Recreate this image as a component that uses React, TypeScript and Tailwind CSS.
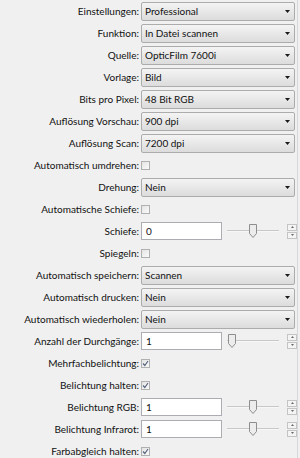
import React from 'react';

type Row =
  | { label: string; kind: 'select'; value: string }
  | { label: string; kind: 'check'; checked: boolean }
  | { label: string; kind: 'slider'; value: string; pos: number };

const rows: Row[] = [
  { label: 'Einstellungen:', kind: 'select', value: 'Professional' },
  { label: 'Funktion:', kind: 'select', value: 'In Datei scannen' },
  { label: 'Quelle:', kind: 'select', value: 'OpticFilm 7600i' },
  { label: 'Vorlage:', kind: 'select', value: 'Bild' },
  { label: 'Bits pro Pixel:', kind: 'select', value: '48 Bit RGB' },
  { label: 'Auflösung Vorschau:', kind: 'select', value: '900 dpi' },
  { label: 'Auflösung Scan:', kind: 'select', value: '7200 dpi' },
  { label: 'Automatisch umdrehen:', kind: 'check', checked: false },
  { label: 'Drehung:', kind: 'select', value: 'Nein' },
  { label: 'Automatische Schiefe:', kind: 'check', checked: false },
  { label: 'Schiefe:', kind: 'slider', value: '0', pos: 26 },
  { label: 'Spiegeln:', kind: 'check', checked: false },
  { label: 'Automatisch speichern:', kind: 'select', value: 'Scannen' },
  { label: 'Automatisch drucken:', kind: 'select', value: 'Nein' },
  { label: 'Automatisch wiederholen:', kind: 'select', value: 'Nein' },
  { label: 'Anzahl der Durchgänge:', kind: 'slider', value: '1', pos: 5 },
  { label: 'Mehrfachbelichtung:', kind: 'check', checked: true },
  { label: 'Belichtung halten:', kind: 'check', checked: true },
  { label: 'Belichtung RGB:', kind: 'slider', value: '1', pos: 26 },
  { label: 'Belichtung Infrarot:', kind: 'slider', value: '1', pos: 26 },
  { label: 'Farbabgleich halten:', kind: 'check', checked: true },
];

const Select = ({ value }: { value: string }) => (
  <div className="flex h-[19px] w-[154px] items-center justify-between rounded-[2px] border border-[#acacac] bg-gradient-to-b from-[#f4f4f4] to-[#dcdcdc] pl-[3px] pr-[4px]">
    <span>{value}</span>
    <svg width="5" height="3" viewBox="0 0 5 3">
      <path d="M0 0h5L2.5 3z" fill="#1a1a1a" />
    </svg>
  </div>
);

const Check = ({ checked }: { checked: boolean }) => (
  <div className="flex h-[9px] w-[9px] items-center justify-center border border-[#b0b0b0] bg-gradient-to-br from-[#e4e4e4] to-[#fafafa]">
    {checked && (
      <svg width="7" height="7" viewBox="0 0 7 7">
        <path d="M1 3.5l1.8 2L6 1" stroke="#5a6680" strokeWidth="1.2" fill="none" />
      </svg>
    )}
  </div>
);

const Slider = ({ value, pos }: { value: string; pos: number }) => (
  <div className="flex items-center">
    <div className="flex h-[18px] w-[81px] items-center border border-[#abadb3] bg-white pl-[4px]">
      {value}
    </div>
    <div className="relative ml-[5px] h-[18px] w-[52px]">
      <div className="absolute left-0 right-0 top-[8px] h-[2px] border-t border-[#c8c8c8] bg-[#f7f7f7]" />
      <svg className="absolute top-[2px]" style={{ left: pos - 4 }} width="8" height="14" viewBox="0 0 8 14">
        <path d="M0.5 0.5h7v9L4 13.5 0.5 9.5z" fill="#ececec" stroke="#8e8e8e" />
      </svg>
    </div>
    <div className="ml-[8px] flex w-[10px] flex-col gap-[1px]">
      <div className="flex h-[7px] items-center justify-center border border-[#c4c4c4] bg-[#f4f4f4]">
        <svg width="3" height="2" viewBox="0 0 3 2">
          <path d="M0 2h3L1.5 0z" fill="#6a6a6a" />
        </svg>
      </div>
      <div className="flex h-[7px] items-center justify-center border border-[#c4c4c4] bg-[#f4f4f4]">
        <svg width="3" height="2" viewBox="0 0 3 2">
          <path d="M0 0h3L1.5 2z" fill="#6a6a6a" />
        </svg>
      </div>
    </div>
  </div>
);

const App: React.FC = () => {
  return (
    <div className="flex h-[458px] w-[300px] overflow-hidden bg-[#f0f0f0] text-[10px] text-[#111111]" style={{ fontFamily: 'Lato, "Noto Sans", sans-serif' }}>
      <div className="grid w-[297px] grid-cols-[139px_1fr] content-start gap-x-[2px]">
        {rows.map((row) => (
          <React.Fragment key={row.label}>
            <div className="flex h-[22px] items-center justify-end whitespace-nowrap">{row.label}</div>
            <div className="flex h-[22px] items-center">
              {row.kind === 'select' && <Select value={row.value} />}
              {row.kind === 'check' && <Check checked={row.checked} />}
              {row.kind === 'slider' && <Slider value={row.value} pos={row.pos} />}
            </div>
          </React.Fragment>
        ))}
      </div>
      <div className="w-[1px] bg-[#d8d8d8]" />
    </div>
  );
};

export default App;
